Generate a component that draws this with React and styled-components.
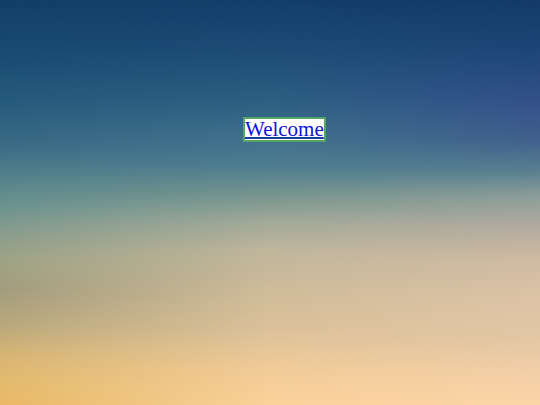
import React from 'react';
import styled, { createGlobalStyle } from 'styled-components';

const GlobalStyle = createGlobalStyle`
  html, body {
    margin: 0;
    padding: 0;
    width: 100%;
    height: 100%;
    overflow: hidden;
  }
  #root {
    height: 100%;
  }
`;

// sky photo approximated by three vertical gradients blended left / centre / right
const Sky = styled.div`
  position: relative;
  width: 540px;
  height: 405px;
  box-sizing: border-box;
  padding: 117px 0 0 243px;
  font-family: "Liberation Serif", "Times New Roman", serif;
  background: linear-gradient(
    to bottom,
    #123e6a 0px,
    #1d4c76 50px,
    #2c5f82 100px,
    #3f6f8c 135px,
    #4d7d90 165px,
    #77958f 195px,
    #a2aa99 222px,
    #c0b69c 250px,
    #cfbc9a 290px,
    #dcc29b 330px,
    #f2cc98 370px,
    #fad29a 405px
  );

  &::before,
  &::after {
    content: "";
    position: absolute;
    inset: 0;
    pointer-events: none;
  }

  &::before {
    background: linear-gradient(
      to bottom,
      #123e66 0px,
      #184a72 50px,
      #265a7c 100px,
      #3a6b85 145px,
      #52808a 175px,
      #6a928f 205px,
      #889c8c 232px,
      #9ea285 260px,
      #a29c7c 290px,
      #b8a77c 325px,
      #d6b474 355px,
      #e4ba6c 385px,
      #e9b865 405px
    );
    -webkit-mask-image: linear-gradient(to right, #000 0%, transparent 50%);
    mask-image: linear-gradient(to right, #000 0%, transparent 50%);
  }

  &::after {
    background: linear-gradient(
      to bottom,
      #133a68 0px,
      #1d4676 50px,
      #33508a 100px,
      #40608c 140px,
      #5a8090 172px,
      #8a9c98 195px,
      #b1aa9f 225px,
      #d0bba3 262px,
      #dcc3a5 300px,
      #e3c7a5 340px,
      #f5d0a8 380px,
      #fcd5a8 405px
    );
    -webkit-mask-image: linear-gradient(to left, #000 0%, transparent 50%);
    mask-image: linear-gradient(to left, #000 0%, transparent 50%);
  }
`;

const WelcomeLink = styled.a`
  position: relative;
  z-index: 1;
  display: inline-block;
  background: #ffffff;
  border: 2px solid #55a666;
  padding: 0;
  font-size: 21px;
  line-height: 21px;
  color: #1010dd;
  text-decoration: underline;
  text-decoration-color: #1c3aa0;
  text-decoration-thickness: 2px;
`;

export default function App() {
  return (
    <>
      <GlobalStyle />
      <Sky>
        <WelcomeLink href="#">Welcome</WelcomeLink>
      </Sky>
    </>
  );
}
